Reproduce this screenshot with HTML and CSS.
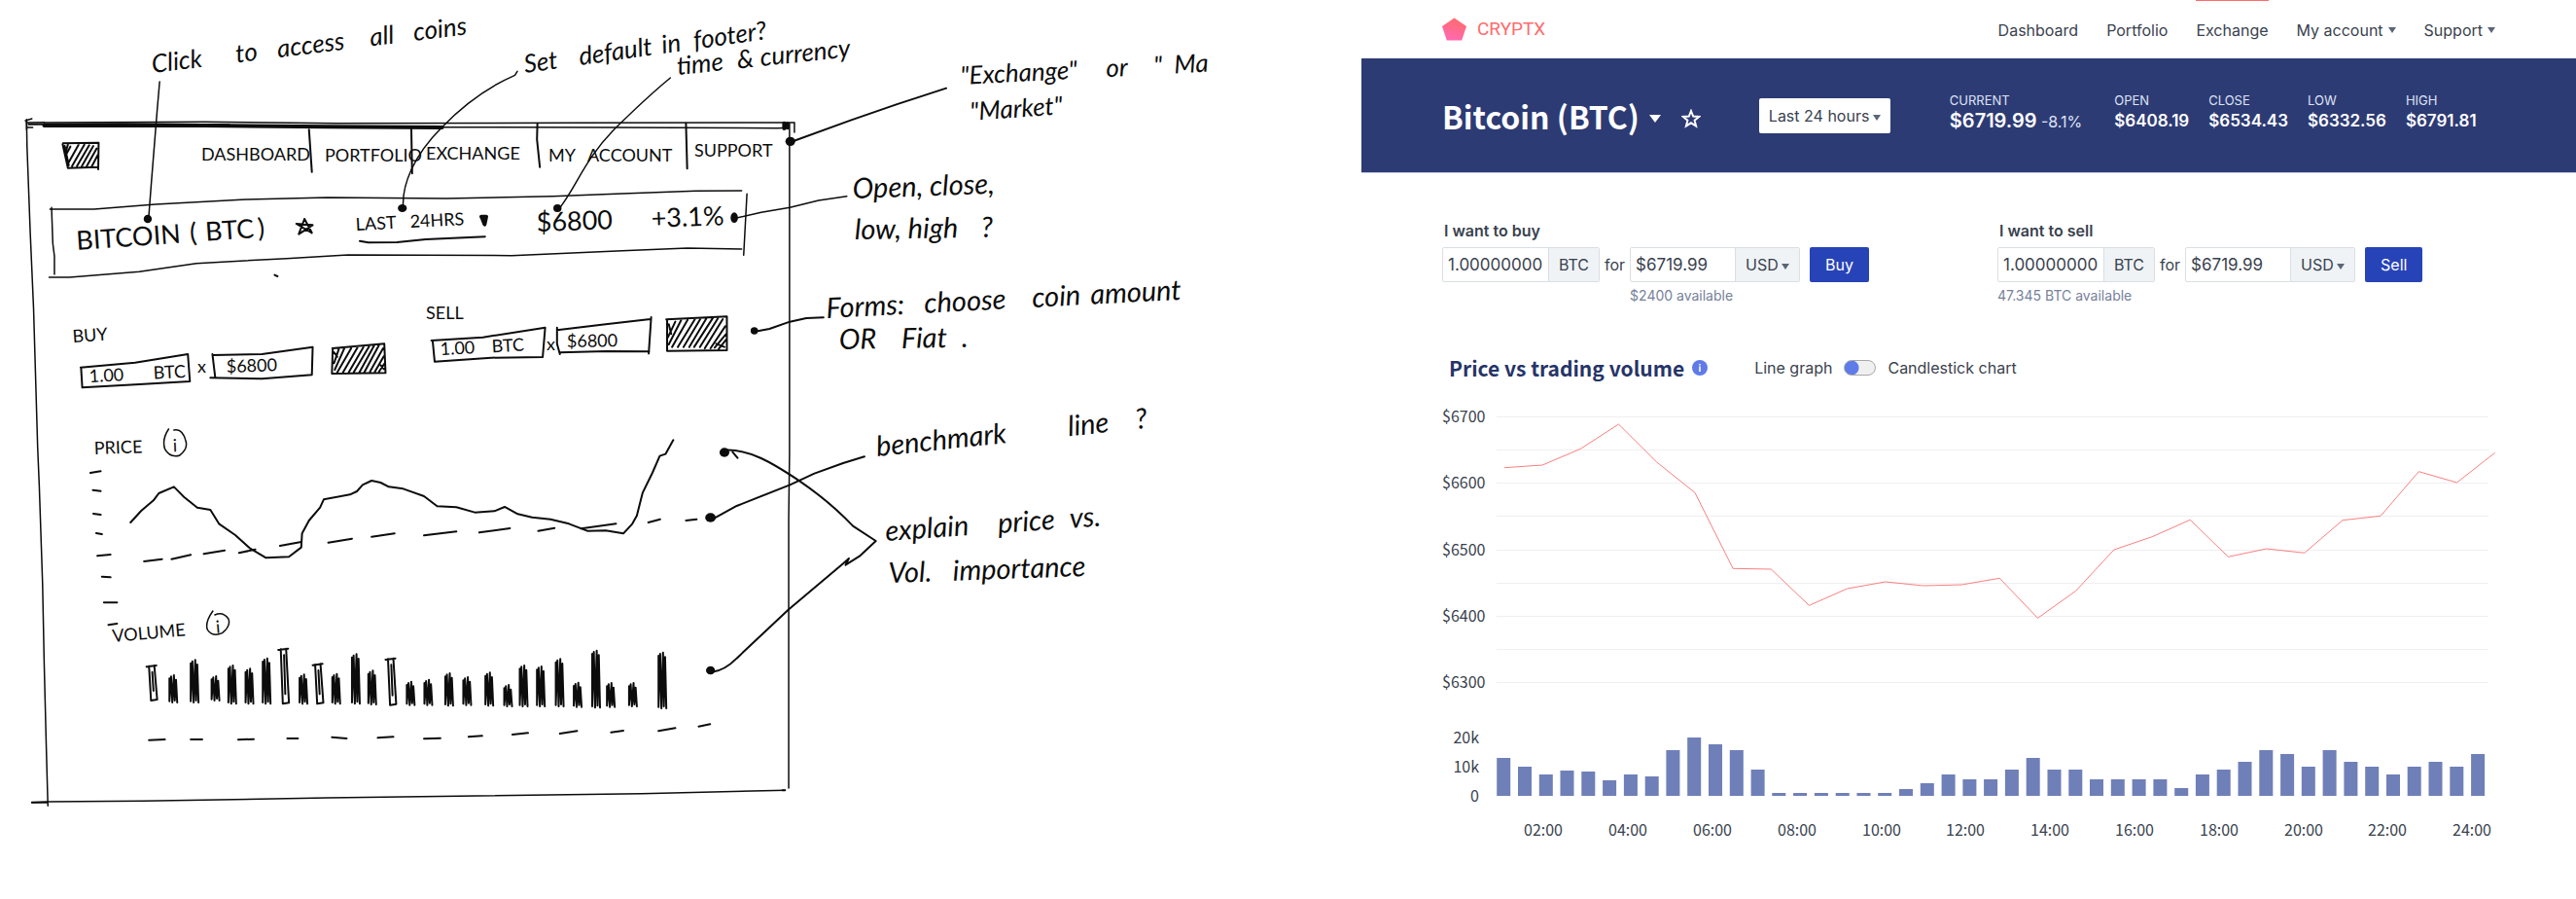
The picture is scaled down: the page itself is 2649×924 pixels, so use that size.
FILE: index.html
```html
<!DOCTYPE html>
<html lang="en">
<head>
<meta charset="utf-8">
<title>CryptX – Exchange</title>
<link rel="stylesheet" href="styles.css">
</head>
<body class="board">

<section class="sketch" aria-label="Exchange page wireframe">
<svg class="sketch-svg" viewBox="0 0 1400 924" role="img" aria-label="Annotated wireframe">
  <g class="ink" transform="scale(0.42088 0.33333)">
    <!-- frame -->
    <path d="M65 368V400M64 378L108 377M62 372L78 366M65 393H80"/>
    <path d="M65 372L66 450L74 720L82 950L92 1380L96 1500L104 1800L108 2050L113 2300L117 2485"/>
    <path d="M78 2474L118 2472L350 2470L800 2460L1568 2447L1918 2437"/>
    <path class="thick" d="M78 2474H115M1912 2437H1918"/>
    <path d="M108 378L500 376L820 380L1400 379L1940 378"/>
    <path class="thick" d="M70 383L300 382L560 385"/>
    <path class="bold" d="M108 387L500 387L800 391L1080 393"/>
    <path d="M1080 392L1500 393L1900 395L1926 394"/>
    <path d="M1929 380V1400L1927 1600V2430M1941 378V408"/>
    <path class="bold" d="M1916 380V396M1924 382V394"/>
    <!-- navigation dividers -->
    <path class="thick" d="M755 400L762 530M1005 398L1007 535M1313 382L1312 430L1319 515M1676 380L1679 520"/>
    <!-- logo block -->
    <path class="thick" d="M154 442L241 440L240 522M153 445L166 518L240 515M158 450L168 510M160 480L172 452M166 505L192 446M176 512L206 446M188 512L218 448M200 512L228 450M212 512L236 458M224 514L239 478M166 446L160 470"/>
    <!-- title bar -->
    <path d="M122 645L230 645L380 630L600 615L800 609L1090 612L1350 605L1520 597L1700 589L1812 588M126 640L129 750L133 790V846M120 855L170 855L340 838L480 812L700 797L850 786L1250 788L1520 773L1680 765L1812 768M1825 598L1817 787"/>
    <path class="thick" d="M744 675L730 722L764 694L724 690L762 718L744 675M879 743L900 748L970 747L1040 738L1185 730"/>
    <path class="bold" d="M1176 668H1188L1184 692L1178 672"/>
    <path class="thick" d="M671 848L678 852"/>
    <!-- buy and sell boxes -->
    <path class="thick" d="M197 1133L330 1118L459 1092L464 1176L330 1186L201 1195L198 1133M520 1095L640 1092L764 1070L762 1156L640 1168L514 1165M519 1092L526 1165"/>
    <path class="thick" d="M1054 1050L1180 1040L1332 1010L1326 1101L1200 1103L1062 1115L1057 1050M1361 1010V1060L1368 1092M1361 1018L1480 1000L1589 984M1591 978L1585 1090M1368 1087L1480 1083L1586 1084"/>
    <path class="thick" d="M812 1074L939 1060L942 1150L811 1152L813 1074M816 1120L828 1076M818 1140L842 1072M824 1148L858 1074M838 1148L874 1070M852 1148L888 1070M864 1148L902 1068M878 1148L914 1066M890 1148L926 1064M904 1146L936 1074M916 1146L938 1098M926 1146L940 1120M816 1086L824 1100M930 1126L938 1138"/>
    <path class="thick" d="M1628 985L1776 976L1776 1080L1630 1082V985M1632 1040L1650 992M1634 1062L1664 988M1642 1070L1680 986M1656 1070L1698 984M1670 1070L1712 982M1684 1070L1726 982M1696 1070L1742 980M1710 1070L1754 982M1722 1074L1766 984M1736 1074L1772 1006M1746 1072L1774 1030M1756 1076L1775 1046M1634 1000L1640 1030M1750 1060L1770 1070"/>
    <!-- callouts -->
    <path d="M390 252L384 340L370 560L363 675"/>
    <path d="M1264 220L1258 232C1180 275 1120 340 1080 392C1010 480 982 570 985 640"/>
    <path d="M1638 240C1580 300 1540 350 1500 400C1430 490 1410 570 1370 637"/>
    <path class="thick" d="M1932 438L2080 370L2190 322L2312 272"/>
    <path d="M1800 672L1860 655L1930 640L2000 618L2069 605"/>
    <path class="thick" d="M1845 1022L1880 1014L1930 992L1970 981L2012 979"/>
    <path class="thick" d="M1742 1600L1800 1560L1930 1495L1990 1460L2060 1428L2112 1408"/>
    <path class="thick" d="M1768 1388C1830 1382 1890 1430 1950 1480C2020 1540 2060 1590 2084 1622L2140 1668L2100 1715L2066 1742L2074 1722L2060 1738L1926 1880L1800 2030Q1770 2068 1740 2072M1790 1394L1802 1412"/>
    <g class="dots">
      <ellipse cx="361" cy="675" rx="10" ry="13"/><ellipse cx="983" cy="642" rx="11" ry="12"/>
      <ellipse cx="1362" cy="642" rx="10" ry="12"/><ellipse cx="1931" cy="436" rx="12" ry="14"/>
      <ellipse cx="1794" cy="671" rx="9" ry="16"/><ellipse cx="1843" cy="1020" rx="9" ry="11"/>
      <ellipse cx="1736" cy="1596" rx="13" ry="14"/><ellipse cx="1770" cy="1395" rx="12" ry="14"/>
      <ellipse cx="1736" cy="2067" rx="11" ry="13"/>
    </g>
    <!-- charts -->
    <g transform="translate(0 1290)">
      <path class="thick" d="M319 321L345 285L375 253L388 231L425 211L450 243L482 275L514 282L535 325L575 360L610 400L650 430L706 427L736 398L738 355L755 315L782 275L791 250L855 235L872 225L886 205L908 192L930 198L950 211L985 217L1036 240L1068 271L1115 274L1160 290L1208 286L1233 273L1265 295L1300 305L1345 311L1390 325L1435 347L1480 346L1523 355L1545 325L1556 300L1570 230L1594 168L1612 116L1626 110L1645 67"/>
      <path class="thick" d="M352 441L396 434M419 434L466 421M498 418L549 407M584 415L624 404M684 393L736 381M802 383L860 371M908 365L964 355M1036 361L1115 349M1171 352L1246 339M1315 347L1355 338M1420 340L1505 325M1584 321L1613 311M1676 315L1702 311"/>
      <path class="thick" d="M221 168L246 163M227 221L246 224M228 294L246 297M235 354L249 357M238 424L270 420M249 488L270 490M254 568L286 568M265 637L286 633"/>
      <path class="thick" d="M364 992L403 990M466 990L494 990M582 991L620 989M702 987L728 987M811 983L847 987M923 985L961 982M1036 988L1076 986M1145 982L1178 979M1252 975L1290 970M1368 972L1410 964M1493 968L1523 963M1609 964L1650 955M1707 950L1735 943"/>
      <path d="M412 33Q395 65 403 95Q415 122 438 115Q460 95 454 70Q446 30 425 36M520 594Q500 630 507 652Q520 675 543 662Q565 640 558 618Q545 595 525 606"/>
      <g id="sketch-bars"></g>
    </g>
  </g>

  <g class="note">
    <text transform="translate(157 75) rotate(-7)">Click <tspan x="87">to</tspan> <tspan x="130">access</tspan> <tspan x="226">all</tspan> <tspan x="271">coins</tspan></text>
    <text transform="translate(540 75) rotate(-8)">Set <tspan x="57">default</tspan> <tspan x="143">in</tspan> <tspan x="176">footer?</tspan></text>
    <text transform="translate(697 77) rotate(-6)">time <tspan x="62">&amp;</tspan> <tspan x="86">currency</tspan></text>
    <text transform="translate(988 87) rotate(-3)">"Exchange" <tspan x="150">or</tspan> <tspan x="199">"</tspan> <tspan x="220">Ma</tspan></text>
    <text transform="translate(998 124) rotate(-4)">"Market"</text>
  </g>
  <g class="note note-large">
    <text transform="translate(877 204) rotate(-2)">Open, close,</text>
    <text transform="translate(879 246) rotate(-1)">low, high <tspan x="130">?</tspan></text>
    <text transform="translate(850 327) rotate(-3)">Forms: <tspan x="101">choose</tspan> <tspan x="212">coin</tspan> <tspan x="272">amount</tspan></text>
    <text transform="translate(863 359) rotate(-1)">OR <tspan x="64">Fiat</tspan> <tspan x="126">.</tspan></text>
    <text transform="translate(902 469) rotate(-6)">benchmark <tspan x="198">line</tspan> <tspan x="268">?</tspan></text>
    <text transform="translate(911 556) rotate(-4)">explain <tspan x="116">price</tspan> <tspan x="190">vs.</tspan></text>
    <text transform="translate(914 599) rotate(-2)">Vol. <tspan x="66">importance</tspan></text>
  </g>
  <g class="caps">
    <text x="207" y="165">DASHBOARD</text><text x="334" y="166">PORTFOLIO</text><text x="438" y="164">EXCHANGE</text><text x="564" y="166">MY <tspan x="604">ACCOUNT</tspan></text><text x="714" y="161">SUPPORT</text>
    <text class="big" transform="translate(79 257) rotate(-4)">BITCOIN <tspan x="117">(</tspan><tspan x="133">BTC</tspan><tspan x="187">)</tspan></text>
    <text transform="translate(366 237) rotate(-3)">LAST <tspan x="56">24HRS</tspan></text>
    <text class="big" transform="translate(552 238) rotate(-2)">$6800 <tspan x="118">+3.1%</tspan></text>
    <text transform="translate(75 352) rotate(-4)">BUY</text><text x="438" y="328">SELL</text>
    <text transform="translate(92 393) rotate(-3)">1.00 <tspan x="66">BTC</tspan></text><text x="203" y="383">x</text><text transform="translate(233 383) rotate(-2)">$6800</text>
    <text transform="translate(453 365) rotate(-3)">1.00 <tspan x="53">BTC</tspan></text><text x="562" y="360">x</text><text transform="translate(583 357) rotate(-1)">$6800</text>
    <text transform="translate(97 467) rotate(-2)">PRICE <tspan x="81">i</tspan></text>
    <text transform="translate(116 660) rotate(-5)">VOLUME <tspan x="107">i</tspan></text>
  </g>
</svg>
</section>

<div class="app">
  <header class="topbar">
    <a class="brand" href="#">
      <svg class="brand-mark" viewBox="0 0 26 24" aria-hidden="true"><defs><linearGradient id="mark" x1="0.6" y1="0" x2="0.3" y2="1"><stop offset="0" stop-color="#ff6b6b"/><stop offset="1" stop-color="#ff69b4"/></linearGradient></defs><path fill="url(#mark)" d="M13 0L26 9L21 24H5L0 9Z"/></svg>
      <span>CRYPTX</span>
    </a>
    <nav class="nav">
      <a href="#">Dashboard</a>
      <a href="#">Portfolio</a>
      <a href="#" class="active" aria-current="page">Exchange</a>
      <a href="#">My account <svg class="caret" viewBox="0 0 8 6"><path d="M0 0H8L4 6Z"/></svg></a>
      <a href="#">Support <svg class="caret" viewBox="0 0 8 6"><path d="M0 0H8L4 6Z"/></svg></a>
    </nav>
  </header>

  <section class="banner">
    <h1 class="coin"><button type="button" class="coin-button">Bitcoin (BTC) <svg class="coin-caret" viewBox="0 0 12 8"><path d="M0 0H12L6 8Z"/></svg></button></h1>
    <button type="button" class="star" aria-label="Add to favourites"><svg viewBox="0 0 20 20"><path d="M10 2L12.2 7.6L18.2 7.9L13.6 11.7L15.1 17.6L10 14.3L4.9 17.6L6.4 11.7L1.8 7.9L7.8 7.6Z"/></svg></button>
    <div class="picker period">
      <select aria-label="Period"><option>Last 24 hours</option></select>
      <svg class="caret" viewBox="0 0 8 6"><path d="M0 0H8L4 6Z"/></svg>
    </div>
    <dl class="stats">
      <div class="stat current"><dt>CURRENT</dt><dd><strong>$6719.99</strong> <span>-8.1%</span></dd></div>
      <div class="stat"><dt>OPEN</dt><dd>$6408.19</dd></div>
      <div class="stat"><dt>CLOSE</dt><dd>$6534.43</dd></div>
      <div class="stat"><dt>LOW</dt><dd>$6332.56</dd></div>
      <div class="stat"><dt>HIGH</dt><dd>$6791.81</dd></div>
    </dl>
  </section>

  <main class="content">
    <div class="trades">
      <form class="trade">
        <label class="trade-title" for="buy-amount">I want to buy</label>
        <div class="group"><input id="buy-amount" value="1.00000000"><span class="unit">BTC</span></div>
        <label class="for" for="buy-price">for</label>
        <div class="group"><input id="buy-price" value="$6719.99">
          <div class="picker unit"><select aria-label="Buy currency"><option>USD</option></select><svg class="caret" viewBox="0 0 8 6"><path d="M0 0H8L4 6Z"/></svg></div></div>
        <button type="button" class="submit">Buy</button>
        <p class="hint hint-price">$2400 available</p>
      </form>
      <form class="trade">
        <label class="trade-title" for="sell-amount">I want to sell</label>
        <div class="group"><input id="sell-amount" value="1.00000000"><span class="unit">BTC</span></div>
        <label class="for" for="sell-price">for</label>
        <div class="group"><input id="sell-price" value="$6719.99">
          <div class="picker unit"><select aria-label="Sell currency"><option>USD</option></select><svg class="caret" viewBox="0 0 8 6"><path d="M0 0H8L4 6Z"/></svg></div></div>
        <button type="button" class="submit">Sell</button>
        <p class="hint">47.345 BTC available</p>
      </form>
    </div>

    <div class="chart-head">
      <h2>Price vs trading volume</h2>
      <svg class="info" viewBox="0 0 16 16" role="img" aria-label="Info"><circle cx="8" cy="8" r="8" fill="#5f7be9"/><path fill="#fff" d="M7.2 6.6H8.8V12H7.2ZM7.2 4H8.8V5.5H7.2Z"/></svg>
      <span class="mode">Line graph</span>
      <input type="checkbox" id="mode" class="toggle" aria-label="Chart type">
      <label class="mode" for="mode">Candlestick chart</label>
    </div>

    <svg class="chart" viewBox="0 0 1083 460" role="img" aria-label="Price and volume">
      <g id="grid" class="grid"></g>
      <path id="price" class="price" d=""/>
      <g id="volume" class="volume"></g>
      <g id="labels" class="axis"></g>
    </svg>
  </main>
</div>
<script src="chart.js"></script>
</body>
</html>
```
FILE: styles.css
```css
* { box-sizing: border-box; }

body {
  margin: 0;
  background: #fff;
  color: #39424e;
  font: 16px/20px Inter, "Open Sans", sans-serif;
}

h1, h2, p, dl, dd { margin: 0; }
a { color: inherit; text-decoration: none; }
button, input, select { font: inherit; color: inherit; }
button { cursor: pointer; }

.board {
  display: grid;
  grid-template-columns: 1400fr 1249fr;
  align-items: start;
}

/* wireframe */
.sketch-svg { display: block; width: 100%; }
.ink path { fill: none; stroke: #0c0c0c; stroke-width: 1.5px; stroke-linecap: round; stroke-linejoin: round; vector-effect: non-scaling-stroke; }
.ink .thick { stroke-width: 2px; }
.ink .bold { stroke-width: 4px; }
.dots ellipse { fill: #0c0c0c; }
.note text { font: italic 26px Lato, sans-serif; fill: #0c0c0c; }
.note-large text { font-size: 29px; }
.caps text { font: 18px Lato, sans-serif; fill: #0c0c0c; }
.caps .big { font-size: 27px; }

/* header */
.topbar {
  display: flex;
  justify-content: space-between;
  height: 60px;
  padding: 0 83px;
}
.brand {
  display: flex;
  align-items: center;
  gap: 11px;
  color: #ff6b6b;
  font: 19px/20px Roboto, sans-serif;
}
.brand-mark { width: 25px; height: 24px; }
.nav { display: flex; gap: 29px; }
.nav a {
  display: flex;
  align-items: center;
  gap: 5px;
  border-top: 1px solid transparent;
}
.nav .active { border-color: #ff6b6b; }
.caret { width: 8px; height: 6px; fill: #5b6676; }

/* banner */
.banner {
  display: flex;
  align-items: center;
  height: 118px;
  padding: 0 83px;
  background: #2d3b74;
  border-bottom: 1px solid #c0c9e6;
  color: #fff;
}
.coin { font: bold 32px/40px "Noto Sans CJK SC", sans-serif; }
.coin-button {
  display: flex;
  align-items: center;
  gap: 10px;
  padding: 0;
  border: 0;
  background: none;
}
.coin-caret { width: 12px; height: 8px; margin-top: 6px; fill: #fff; }
.star { margin: 6px 60px 0 21px; padding: 0; border: 0; background: none; }
.star svg { display: block; width: 20px; height: 20px; fill: none; stroke: #fff; stroke-width: 2px; }

.picker { display: grid; align-items: center; }
.picker select, .picker .caret { grid-area: 1 / 1; }
.picker select {
  width: 100%;
  height: 100%;
  padding: 0 10px;
  border: 0;
  background: none;
  appearance: none;
}
.picker .caret { justify-self: end; margin: 4px 10px 0 0; pointer-events: none; }
.period { width: 135px; height: 36px; border-radius: 2px; background: #fff; color: #39424e; }

.stats { display: flex; gap: 20px; margin-left: 61px; padding-bottom: 6px; }
.current { margin-right: 13px; }
.stat dt { font-size: 13px; line-height: 18px; color: #dfe4f4; }
.stat dd { font-size: 17px; line-height: 24px; font-weight: 600; white-space: nowrap; }
.current strong { font-size: 20px; font-weight: 600; }
.current span { font-size: 16px; font-weight: 400; color: #dfe4f4; }

/* trade forms */
.content { padding: 48px 83px 0; }
.trades { display: grid; grid-template-columns: 571fr 512fr; }
.trade {
  display: grid;
  grid-template-columns: 162px auto 175px auto;
  justify-content: start;
  align-items: center;
  row-gap: 6px;
}
.trade-title { grid-column: 1 / -1; padding-left: 2px; font-weight: 600; line-height: 22px; }
.group {
  display: flex;
  height: 36px;
  border: 1px solid #dadfe3;
  border-radius: 2px;
}
.group input { flex: 1; width: 0; min-width: 0; padding: 0 5px; border: 0; background: none; font-size: 17px; }
.unit {
  display: grid;
  align-items: center;
  padding: 0 10px;
  border-left: 1px solid #dadfe3;
  background: #eff3f6;
}
.picker.unit { width: 66px; padding: 0; }
.for { padding: 0 5px; }
.submit {
  height: 36px;
  margin-left: 10px;
  padding: 0 16px;
  border: 0;
  border-radius: 2px;
  background: #2743b8;
  color: #fff;
}
.hint { grid-column: 1 / -1; font-size: 14px; line-height: 16px; color: #76819a; }
.hint-price { grid-column-start: 3; }

/* chart */
.chart-head { display: flex; align-items: center; padding: 50px 0 0 7px; }
.chart-head h2 { font: bold 21px/32px "Noto Sans CJK SC", sans-serif; color: #263468; }
.info { width: 16px; height: 16px; margin: 0 48px 0 8px; }
.toggle {
  width: 33px;
  height: 16px;
  margin: 0 12px;
  border: 1px solid #a8a8a8;
  border-radius: 8px;
  background: radial-gradient(circle at 7px 7px, #5f7be9 7px, #f0f0f0 8px);
  appearance: none;
}
.chart { display: block; width: 100%; margin-top: 20px; }
.grid path { stroke: #efeff1; stroke-width: 1px; }
.price { fill: none; stroke: #fa7f7f; stroke-width: 1px; }
.volume rect { fill: #6f7fb8; }
.axis text { font: 16px "Noto Sans CJK SC", sans-serif; fill: #39424e; }
.axis .end { text-anchor: end; }
.axis .mid { text-anchor: middle; }
```
FILE: chart.js
```js
const NS = 'http://www.w3.org/2000/svg';

function add(parent, name, attrs, text) {
  const el = document.createElementNS(NS, name);
  for (const key in attrs) el.setAttribute(key, attrs[key]);
  if (text) el.textContent = text;
  document.getElementById(parent).appendChild(el);
}

// price axis: one line per $50, a label per $100
const TOP = 14, STEP = 34.125;
for (let i = 0; i < 9; i++) {
  const y = TOP + i * STEP;
  add('grid', 'path', { d: `M56 ${Math.round(y) + 0.5}H1076` });
  if (i % 2 === 0) add('labels', 'text', { x: 0, y: Math.round(y) + 6 }, '$' + (6700 - i * 50));
}

const price = [66.7, 64, 47.3, 22, 61, 92.3, 170.3, 171, 208.3, 191, 184, 188, 187, 180.3,
  221.3, 193.3, 151, 137.7, 120.3, 158.3, 150, 154.3, 120.7, 116.3, 70.7, 82, 51.3];
document.getElementById('price').setAttribute('d',
  'M' + price.map((y, i) => `${(64 + i * 39.18).toFixed(1)} ${y}`).join('L'));

const BASE = 404;
const volume = [39, 30, 22, 26, 25, 16, 22, 20, 47, 60, 53, 47, 27, 3, 3, 3, 3, 3, 3, 7, 13, 22, 17, 17,
  27, 39, 27, 27, 17, 17, 17, 17, 8, 22, 27, 35, 47, 43, 30, 47, 35, 30, 22, 30, 35, 30, 43];
volume.forEach((h, i) => add('volume', 'rect', { x: (56.2 + i * 21.78).toFixed(1), y: BASE - h, width: 14, height: h }));

['20k', '10k', '0'].forEach((t, i) => add('labels', 'text', { class: 'end', x: 38, y: BASE - 54 + i * 30 }, t));
for (let i = 0; i < 12; i++) {
  add('labels', 'text', { class: 'mid', x: Math.round(104.4 + i * 86.8), y: BASE + 41 },
    String((i + 1) * 2).padStart(2, '0') + ':00');
}

// scribbled volume bars in the wireframe: centre, top, bottom
[[372, 762, 870, 1], [422, 792, 876], [474, 745, 876], [525, 795, 870], [566, 762, 880], [608, 772, 880],
  [650, 740, 880], [694, 710, 880, 1], [740, 790, 880], [778, 757, 880, 1], [820, 788, 880], [868, 727, 880],
  [908, 778, 882], [956, 740, 884, 1], [1002, 812, 884], [1045, 806, 884], [1096, 786, 886], [1140, 798, 884],
  [1194, 784, 886], [1240, 822, 888], [1278, 762, 888], [1320, 765, 888], [1366, 742, 888], [1410, 815, 890],
  [1455, 716, 892], [1491, 816, 890], [1545, 816, 888], [1617, 722, 894]].forEach(([x, a, b, hollow]) => {
  const d = hollow
    ? `M${x - 14} ${a + 4}L${x + 10} ${a}M${x - 8} ${a + 2}L${x - 3} ${b}L${x + 12} ${b - 3}L${x + 5} ${a}M${x} ${a + 20}L${x + 3} ${b - 30}`
    : `M${x - 8} ${a + 10}L${x - 8} ${b - 4}L${x - 4} ${a + 4}L${x - 1} ${b}L${x + 3} ${a}L${x + 5} ${b - 6}L${x + 8} ${a + 14}L${x + 11} ${b}`;
  add('sketch-bars', 'path', { class: 'thick', d });
});
```
